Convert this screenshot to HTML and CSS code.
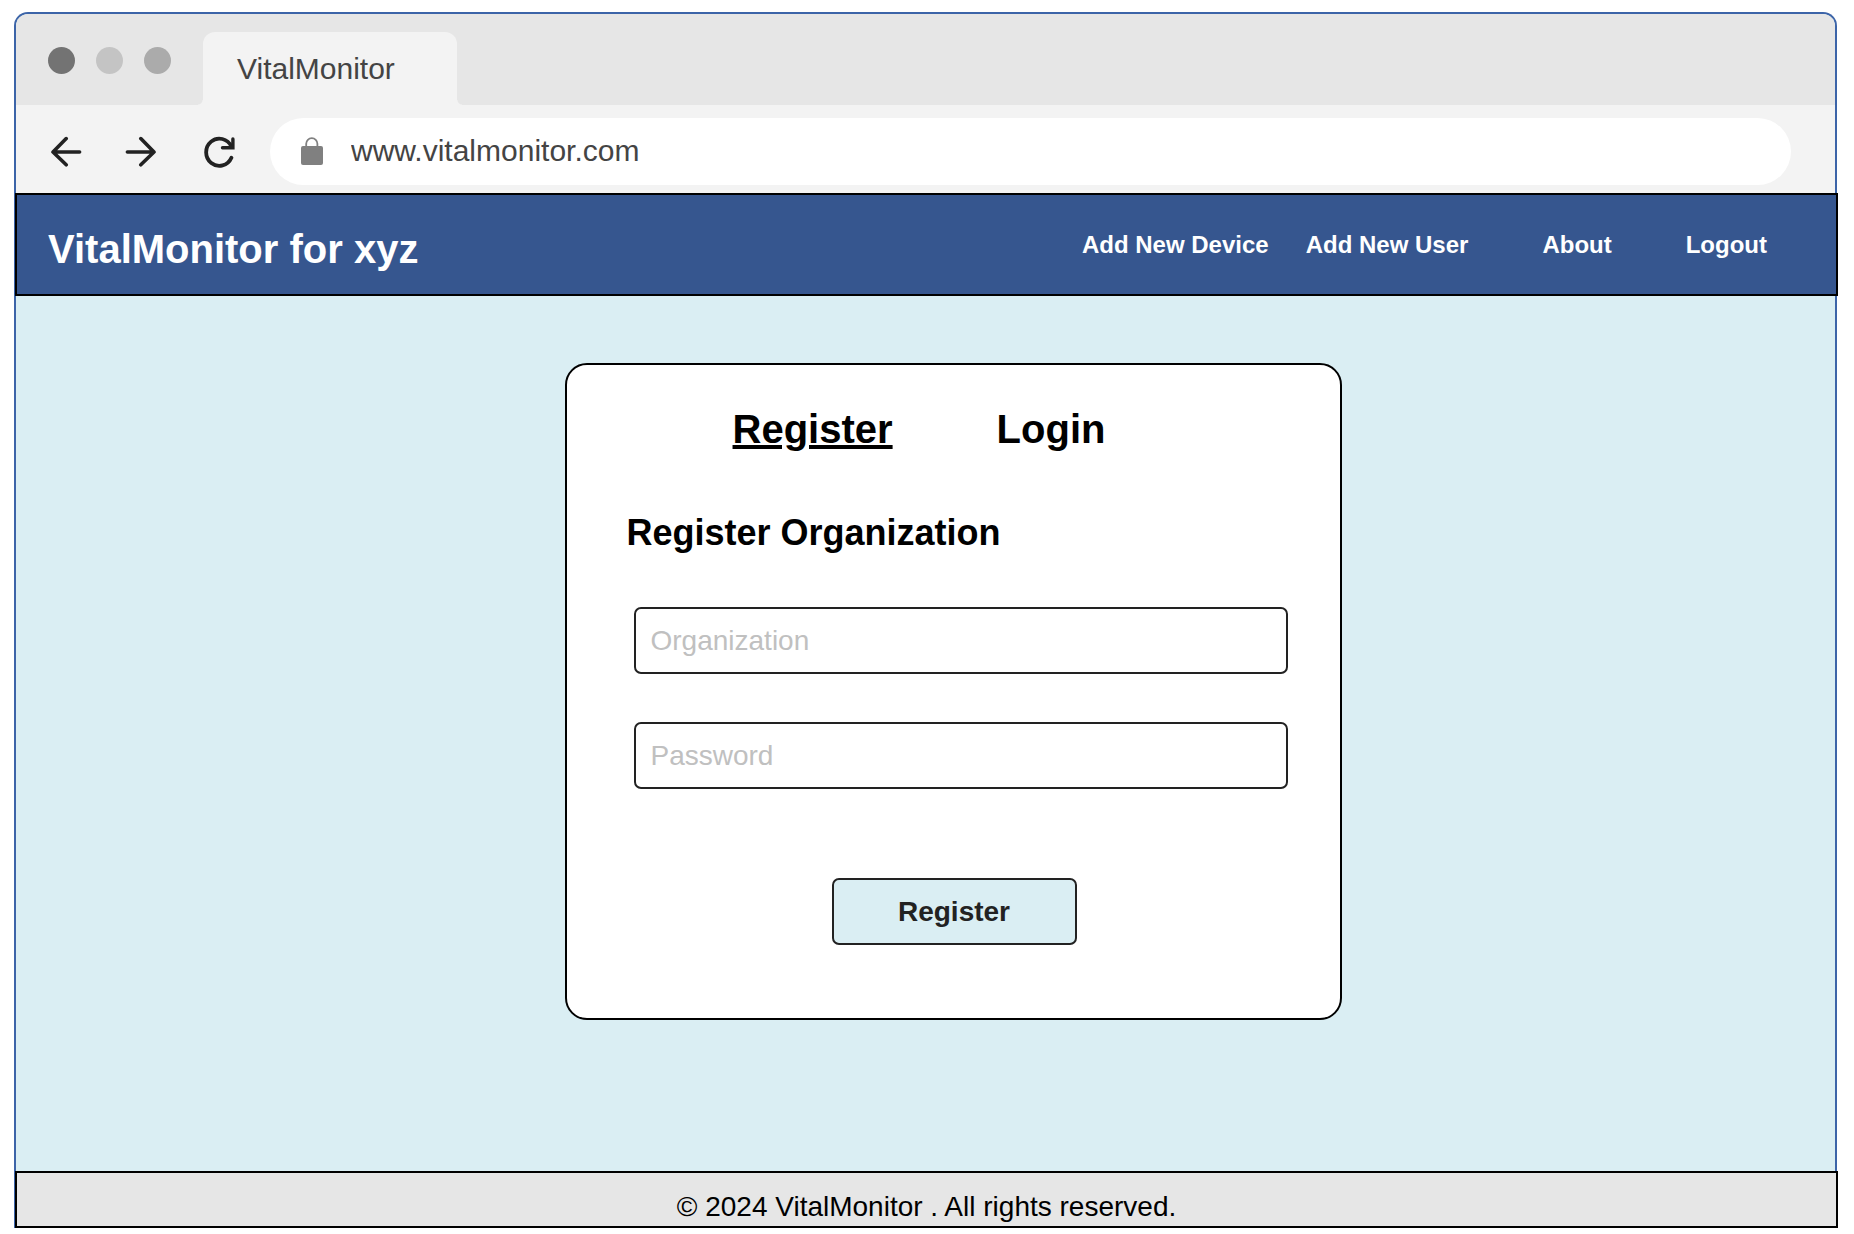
FILE: index.html
```html
<!DOCTYPE html>
<html lang="en">
<head>
  <meta charset="utf-8">
  <meta name="viewport" content="width=device-width, initial-scale=1">
  <title>VitalMonitor</title>
  <link rel="stylesheet" href="styles.css">
</head>
<body>
  <div class="window">
    <div class="tab-bar">
      <div class="dots">
        <span class="dot dot-dark"></span>
        <span class="dot dot-light"></span>
        <span class="dot dot-mid"></span>
      </div>
      <div class="tab">VitalMonitor</div>
    </div>
    <div class="toolbar">
      <button class="tool" type="button" aria-label="Back">
        <svg width="31" height="32" viewBox="0 0 31 32" fill="none" stroke="#222" stroke-width="3.6" stroke-linecap="round" stroke-linejoin="round"><path d="M28.600 16H2.400M15.200 2.600L2 16l13.200 12.800"/></svg>
      </button>
      <button class="tool tool-forward" type="button" aria-label="Forward">
        <svg width="31" height="32" viewBox="0 0 31 32" fill="none" stroke="#222" stroke-width="3.6" stroke-linecap="round" stroke-linejoin="round"><path d="M2.400 16H28.600M15.800 2.600L29 16L15.800 28.800"/></svg>
      </button>
      <button class="tool tool-reload" type="button" aria-label="Reload">
        <svg width="31" height="32" viewBox="0 0 31 32" fill="none" stroke="#222" stroke-linecap="round"><path d="M27.300 10.500A13.200 13.600 0 1 0 27.400 21.800" stroke-width="3.800"/><path d="M18.500 11.800H28.900V3" stroke-width="3.400"/></svg>
      </button>
      <div class="address">
        <svg class="lock" width="22" height="28" viewBox="0 0 22 28"><rect y="9" width="22" height="19" rx="2" fill="#808080"/><path d="M5.200 10V6.800a5.600 5.600 0 0 1 11.200 0V10" fill="none" stroke="#808080" stroke-width="1.800"/></svg>
        <input class="url" type="text" aria-label="Address" value="www.vitalmonitor.com">
      </div>
    </div>

    <header class="header">
      <h1 class="brand">VitalMonitor for xyz</h1>
      <nav class="nav">
        <a href="#">Add New Device</a>
        <a href="#">Add New User</a>
        <a class="nav-wide" href="#">About</a>
        <a class="nav-wide" href="#">Logout</a>
      </nav>
    </header>

    <main class="main">
      <form class="card">
        <div class="modes">
          <a class="mode mode-active" href="#">Register</a>
          <a class="mode" href="#">Login</a>
        </div>
        <h2 class="title">Register Organization</h2>
        <div class="fields">
          <input class="field" type="text" placeholder="Organization" aria-label="Organization">
          <input class="field" type="password" placeholder="Password" aria-label="Password">
        </div>
        <button class="submit" type="submit">Register</button>
      </form>
    </main>

    <footer class="footer">© 2024 VitalMonitor . All rights reserved.</footer>
  </div>
</body>
</html>
```
FILE: styles.css
```css
* {
  box-sizing: border-box;
}

body {
  display: flex;
  min-height: 100vh;
  margin: 0;
  padding: 12px 17px 6px 14px;
  background: #fff;
  color: #000;
  font-family: "Liberation Sans", Arial, sans-serif;
}

a {
  color: inherit;
  text-decoration: none;
}

input,
button {
  font-family: inherit;
}

/* Browser frame */
.window {
  display: flex;
  flex: 1;
  flex-direction: column;
  min-width: 0;
  border: 2px solid #3c64a8;
  border-bottom: 0;
  border-radius: 14px 14px 0 0;
  background: #daeef3;
}

.tab-bar {
  display: flex;
  align-items: flex-end;
  height: 91px;
  padding-left: 32px;
  border-radius: 12px 12px 0 0;
  background: #e6e6e6;
}

.dots {
  display: flex;
  align-self: center;
  gap: 21px;
  width: 155px;
  padding-top: 2px;
}

.dot {
  width: 27px;
  height: 27px;
  border-radius: 50%;
}

.dot-dark {
  background: #737373;
}

.dot-light {
  background: #c4c4c4;
}

.dot-mid {
  background: #ababab;
}

.tab {
  position: relative;
  width: 254px;
  height: 73px;
  padding-left: 34px;
  border-radius: 12px 12px 0 0;
  background: #f3f3f3;
  color: #444;
  font-size: 30px;
  line-height: 73px;
}

/* Flared feet of the tab */
.tab::before,
.tab::after {
  position: absolute;
  bottom: 0;
  width: 5px;
  height: 5px;
  content: "";
}

.tab::before {
  right: 100%;
  background: radial-gradient(circle at 0 0, #e6e6e6 4px, #f3f3f3 5px);
}

.tab::after {
  left: 100%;
  background: radial-gradient(circle at 100% 0, #e6e6e6 4px, #f3f3f3 5px);
}

.toolbar {
  display: flex;
  align-items: center;
  height: 88px;
  padding: 5px 44px 0 35px;
  background: #f3f3f3;
}

.tool {
  display: flex;
  flex: none;
  padding: 0;
  border: 0;
  background: none;
}

.tool-forward {
  margin-left: 43px;
}

.tool-reload {
  margin-left: 48px;
}

.address {
  display: flex;
  flex: 1;
  align-items: center;
  gap: 28px;
  height: 67px;
  margin: 0 0 1px 35px;
  padding: 0 31px;
  border-radius: 34px;
  background: #fff;
}

.lock {
  flex: none;
}

.url {
  flex: 1;
  min-width: 0;
  padding: 0;
  border: 0;
  outline: 0;
  background: none;
  color: #444;
  font-size: 30px;
}

/* Site header, one pixel wider than the frame */
.header {
  display: flex;
  align-items: center;
  justify-content: space-between;
  height: 103px;
  margin: 0 -3px 0 -1px;
  padding: 0 69px 0 31px;
  border: 2px solid #000;
  background: #36568f;
  color: #fff;
}

.brand {
  margin: 0;
  padding-top: 8px;
  font-size: 40px;
  line-height: 46px;
}

.nav {
  display: flex;
  gap: 37px;
  font-size: 24px;
  font-weight: bold;
}

.nav-wide {
  margin-left: 37px;
}

.main {
  display: flex;
  flex: 1;
  align-items: flex-start;
  justify-content: center;
  padding: 67px 0 67px 55px;
}

.card {
  display: flex;
  flex-direction: column;
  width: 777px;
  max-width: 100%;
  padding: 41px 52px 73px 60px;
  border: 2px solid #000;
  border-radius: 22px;
  background: #fff;
}

.modes {
  display: flex;
  justify-content: center;
  gap: 104px;
  padding-right: 76px;
  font-size: 40px;
  font-weight: bold;
  line-height: 46px;
}

.mode-active {
  text-decoration: underline;
}

.title {
  margin: 60px 0 53px;
  font-size: 36px;
  line-height: 42px;
}

.fields {
  display: flex;
  flex-direction: column;
  gap: 48px;
  padding-left: 7px;
}

.field {
  width: 100%;
  height: 67px;
  padding: 0 15px;
  border: 2px solid #222;
  border-radius: 7px;
  background: #fff;
  color: #222;
  font-size: 28px;
}

.field::placeholder {
  color: #c0c0c0;
  opacity: 1;
}

.submit {
  align-self: center;
  width: 245px;
  height: 67px;
  margin: 89px 6px 0 0;
  border: 2px solid #222;
  border-radius: 7px;
  background: #daeef3;
  color: #222;
  font-size: 28px;
  font-weight: bold;
}

.footer {
  height: 57px;
  margin: 0 -3px 0 -1px;
  padding-top: 18px;
  border: 2px solid #000;
  background: #e6e6e6;
  font-size: 28px;
  line-height: 32px;
  text-align: center;
}
```
